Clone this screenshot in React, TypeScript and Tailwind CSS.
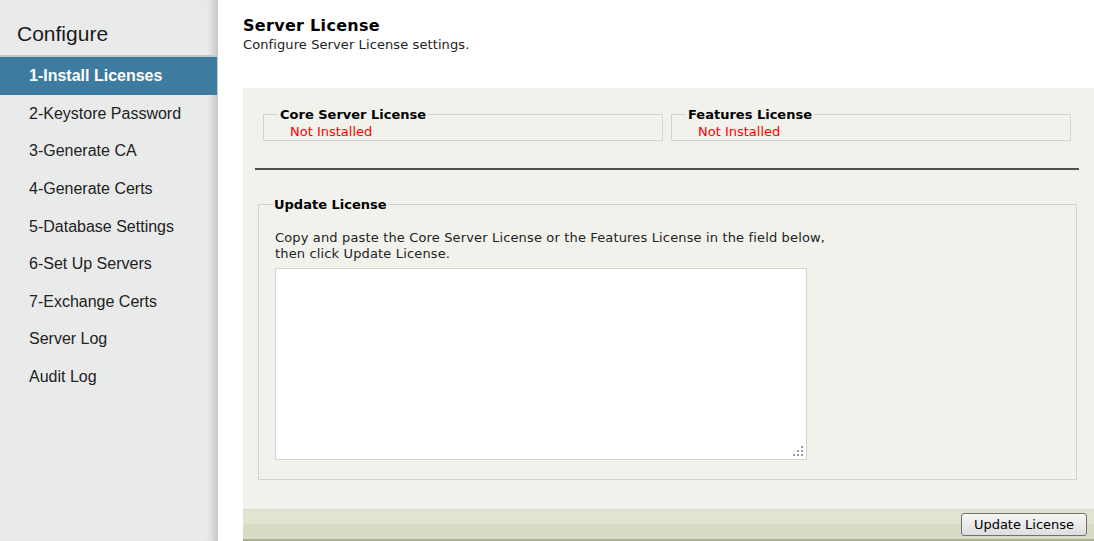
import React from "react";

// ── Menu items ────────────────────────────────
const steps = [
  "1-Install Licenses",
  "2-Keystore Password",
  "3-Generate CA",
  "4-Generate Certs",
  "5-Database Settings",
  "6-Set Up Servers",
  "7-Exchange Certs",
  "Server Log",
  "Audit Log",
];

function Sidebar() {
  return (
    <div className="w-[218px] shrink-0 h-[541px] bg-[#e9eaea] shadow-[inset_-10px_0_8px_-6px_rgba(0,0,0,0.18)] font-['Liberation_Sans',Arial,sans-serif]">
      <div className="h-[57px] pl-[17px] pt-[22px] text-[21px] leading-[24px] text-[#1a1a1a] border-b-2 border-[#c4c6c6]">
        Configure
      </div>
      <ul>
        {steps.map((s, i) =>
          i === 0 ? (
            <li
              key={s}
              className="h-[38px] pl-[29px] flex items-center bg-[#3e7ba0] text-white font-bold text-[16px] mr-[1px]"
            >
              {s}
            </li>
          ) : (
            <li key={s} className="h-[37.6px] pl-[29px] flex items-center text-[16px] text-[#222]">
              {s}
            </li>
          )
        )}
      </ul>
    </div>
  );
}

function LicenseBox({ title, status }: { title: string; status: string }) {
  return (
    <fieldset className="w-[400px] border border-[#d3d3d0] px-[14px] pb-[1px]">
      <legend className="px-[2px] font-bold text-[13px] leading-[15px] text-black">{title}</legend>
      <div className="pl-[12px] pt-[2px] text-[13px] leading-[15px] text-[#ff0000]">{status}</div>
    </fieldset>
  );
}

// resize grip in the textarea corner
function Grip() {
  const dots = [
    [8, 0],
    [4, 4],
    [8, 4],
    [0, 8],
    [4, 8],
    [8, 8],
  ];
  return (
    <svg width="11" height="11" className="absolute right-[3px] bottom-[3px] pointer-events-none">
      {dots.map(([x, y], i) => (
        <rect key={i} x={x} y={y} width="2" height="2" fill="#9a9a9a" />
      ))}
    </svg>
  );
}

export default function App() {
  return (
    <div className="flex w-[1094px] h-[541px] overflow-hidden bg-white">
      <Sidebar />

      <div className="flex-1 flex flex-col pl-[25px] font-['DejaVu_Sans',Verdana,sans-serif] text-black">
        {/* Header */}
        <div className="pt-[16px] h-[88px]">
          <h1 className="font-bold text-[16px] leading-[20px] tracking-[0.3px]">Server License</h1>
          <p className="mt-[1px] text-[13px] leading-[16px] tracking-[0.1px] text-[#222]">
            Configure Server License settings.
          </p>
        </div>

        {/* Panel */}
        <div className="flex-1 flex flex-col bg-[#f2f2ed]">
          <div className="flex-1 px-[12px]">
            <div className="flex gap-[8px] pl-[8px] pt-[19px]">
              <LicenseBox title="Core Server License" status="Not Installed" />
              <LicenseBox title="Features License" status="Not Installed" />
            </div>

            <div className="mt-[27px] border-t-2 border-[#505050] w-[824px]" />

            <fieldset className="mt-[27px] ml-[3px] w-[819px] h-[283px] border border-[#d3d3d0] px-[14px]">
              <legend className="px-[1px] font-bold text-[13px] leading-[15px]">Update License</legend>
              <p className="pl-[2px] pt-[18px] text-[13px] leading-[16px] tracking-[0.15px] text-[#222]">
                Copy and paste the Core Server License or the Features License in the field below,
                <br />
                then click Update License.
              </p>
              <div className="relative ml-[2px] mt-[6px] w-[532px] h-[192px]">
                <textarea className="block w-full h-full resize-none bg-white border border-[#cfd2d6] outline-none" />
                <Grip />
              </div>
            </fieldset>
          </div>

          {/* Footer */}
          <div className="h-[32px] flex items-center justify-end pr-[7px] bg-[linear-gradient(to_bottom,#e2e4d2_0%,#e2e4d2_45%,#d9dcc5_50%,#d9dcc5_100%)] border-t border-[#d8dac8] border-b-2 border-b-[#a9ae8e]">
            <button className="w-[126px] h-[23px] rounded-[3px] border border-[#707070] bg-[linear-gradient(to_bottom,#f6f6f6,#dedede)] text-[13px] text-black">
              Update License
            </button>
          </div>
        </div>
      </div>
    </div>
  );
}
